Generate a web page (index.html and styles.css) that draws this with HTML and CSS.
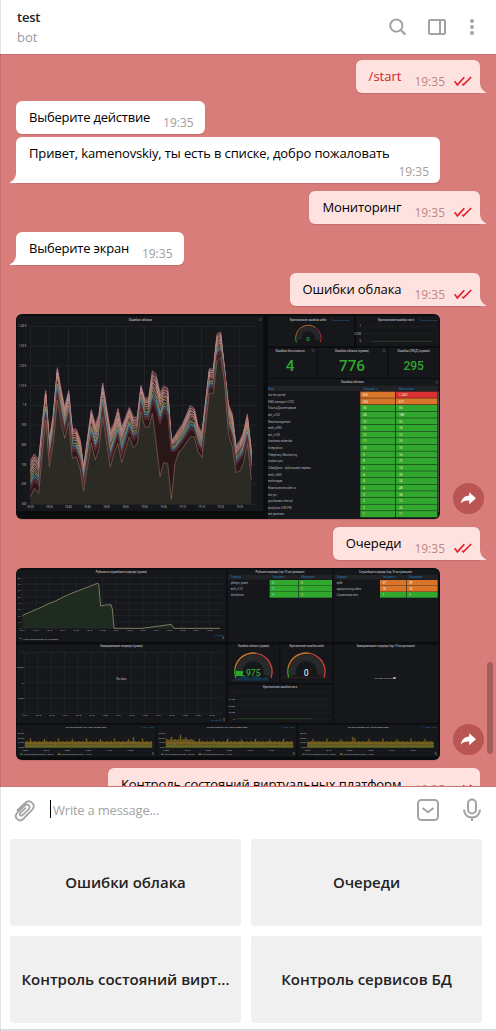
FILE: index.html
```html
<!DOCTYPE html>
<html lang="ru">
<head>
<meta charset="utf-8">
<title>test</title>
<link rel="stylesheet" href="styles.css">
</head>
<body>
<svg class="defs" width="0" height="0">
  <symbol id="ticks" viewBox="0 0 18 11"><path d="M.7 5.3 3.4 8.9 10.3 1.2M8.2 7.8 9.4 8.9 17.2 1" fill="none" stroke="#e5202c" stroke-width="1.7"/></symbol>
  <symbol id="tail" viewBox="0 0 7 11"><path d="M0 0H1C1 5 3 8.5 7 10.2V11H0Z" fill="currentColor"/></symbol>
  <symbol id="share" viewBox="0 0 31 31"><path d="M16.2 9.2 23 15.3 16.2 21.2V17.7C13 17.3 10 18 8 20.4 8.6 15.6 11.8 12.8 16.2 12.6Z" fill="#fff"/></symbol>
</svg>
<div class="app">
  <header class="header">
    <div class="peer"><div class="name">test</div><div class="status">bot</div></div>
    <svg class="header-icons" width="92" height="20" viewBox="0 0 92 20" fill="none" stroke="#a3a3a3" stroke-width="2">
      <circle cx="10.3" cy="8.6" r="6.1"/><path d="M14.8 13 19.3 17.6" stroke-width="2.3"/>
      <rect x="43" y="3" width="16" height="14" rx="1"/><path d="M54 3V17"/>
      <g fill="#a3a3a3" stroke="none"><circle cx="86" cy="4" r="2"/><circle cx="86" cy="10" r="2"/><circle cx="86" cy="16" r="2"/></g>
    </svg>
  </header>

  <main class="chat">
    <div class="msg out"><span class="text command">/start</span><span class="time">19:35</span><svg class="ticks"><use href="#ticks"/></svg><svg class="tail"><use href="#tail"/></svg></div>
    <div class="msg in grouped"><span class="text">Выберите действие</span><span class="time">19:35</span></div>
    <div class="msg in tall"><span class="text">Привет, kamenovskiy, ты есть в списке, добро пожаловать</span><span class="time">19:35</span><svg class="tail"><use href="#tail"/></svg></div>
    <div class="msg out"><span class="text">Мониторинг</span><span class="time">19:35</span><svg class="ticks"><use href="#ticks"/></svg><svg class="tail"><use href="#tail"/></svg></div>
    <div class="msg in"><span class="text">Выберите экран</span><span class="time">19:35</span><svg class="tail"><use href="#tail"/></svg></div>
    <div class="msg out"><span class="text">Ошибки облака</span><span class="time">19:35</span><svg class="ticks"><use href="#ticks"/></svg><svg class="tail"><use href="#tail"/></svg></div>
    <div class="media">
      <svg id="cloud" class="photo" width="424" height="205" viewBox="18 12 1272 615"></svg>
      <svg class="share"><use href="#share"/></svg>
    </div>
    <div class="msg out"><span class="text">Очереди</span><span class="time">19:35</span><svg class="ticks"><use href="#ticks"/></svg><svg class="tail"><use href="#tail"/></svg></div>
    <div class="media">
      <svg id="queues" class="photo" width="424" height="192" viewBox="18 144 1272 576"></svg>
      <svg class="share"><use href="#share"/></svg>
    </div>
    <div class="msg out"><span class="text">Контроль состояний виртуальных платформ</span><span class="time">19:35</span><svg class="ticks"><use href="#ticks"/></svg></div>
    <div class="scrollbar"></div>
  </main>

  <section class="composer">
    <svg class="clip" width="22" height="24" viewBox="0 0 22 24" fill="none" stroke="#a3a3a3" stroke-width="1.8" stroke-linecap="round"><path d="M3.5 11.2 11.2 3.9C16-.3 22.5 5.6 18.3 10.7L9.2 20C5.3 23.7-.6 18.6 2.9 14.2L10.6 6.5C14 3.9 17.1 7.3 14.7 10.1L8.4 16.3C6.6 17.6 4.9 15.8 6.2 14.2L11.3 9.2"/></svg>
    <div class="field">Write a message...</div>
    <svg class="kbd" width="22" height="22" viewBox="0 0 22 22" fill="none" stroke="#a3a3a3" stroke-width="2"><rect x="1" y="1" width="20" height="20" rx="3.5"/><path d="M5.5 9 11 13.3 16.5 9"/></svg>
    <svg class="mic" width="18" height="24" viewBox="0 0 18 24" fill="none" stroke="#a3a3a3" stroke-width="2"><rect x="5" y="1.5" width="8" height="14" rx="4"/><path d="M1 11.5C1 22 17 22 17 11.5M9 19.5V23"/></svg>
  </section>
  <div class="keyboard">
    <div class="key">Ошибки облака</div>
    <div class="key">Очереди</div>
    <div class="key">Контроль состояний вирт...</div>
    <div class="key">Контроль сервисов БД</div>
  </div>
  <div class="bottom-edge"></div>
</div>
<script src="charts.js"></script>
</body>
</html>
```
FILE: styles.css
```css
* { box-sizing: border-box; }
body { margin: 0; background: #fff; font-family: "Open Sans", "Noto Sans", sans-serif; font-size: 13px; }
.defs { position: absolute; }
.app { position: relative; width: 496px; height: 1031px; overflow: hidden; display: flex; flex-direction: column; }
.app::before { content: ""; position: absolute; z-index: 5; left: 0; top: 0; width: 1px; height: 1031px; background: rgba(0, 0, 0, .11); }

.header { flex: none; height: 54px; padding: 7px 18px 0 17px; display: flex; justify-content: space-between; background: #fff; }
.name { font-weight: 600; line-height: 20px; color: #222; letter-spacing: -.2px; }
.status { line-height: 20px; color: #999; }
.header-icons { margin: 10px 0 0 0; }

.chat { position: relative; height: 733px; flex: none; overflow: hidden; display: flex; flex-direction: column; gap: 8px; padding: 5px 16px 0; background: #d87d79; border-top: 1px solid #c56e6c; border-bottom: 1px solid #cd7673; }
.msg { position: relative; flex: none; display: flex; height: 33px; padding-left: 13px; border-radius: 6px; box-shadow: 0 1px 1px #c56c6b; white-space: nowrap; }
.in { align-self: flex-start; background: #fff; color: #fff; padding-right: 11px; border-bottom-left-radius: 0; }
.out { align-self: flex-end; background: #fde2e0; color: #fde2e0; padding-right: 8px; border-bottom-right-radius: 0; }
.grouped { border-bottom-left-radius: 6px; margin-bottom: -5px; }
.text { color: #000; line-height: 18px; margin-top: 7px; letter-spacing: -.1px; }
.in .text { letter-spacing: -.22px; }
.in.tall .text { letter-spacing: -.13px; }
.command { color: #d11e27; letter-spacing: 0; }
.time { color: #a59b9b; font-size: 12px; line-height: 17px; margin: 13px 0 0 13px; }
.out .time { color: #bd8684; }
.tall { height: 46px; width: 424px; justify-content: space-between; }
.tall .text { width: 361px; }
.tall .time { margin: 26px 0 0 -20px; }
.ticks { width: 18px; height: 11px; margin: 16px 0 0 9px; }
.tail { position: absolute; bottom: 0; width: 7px; height: 11px; }
.out .tail { right: -6px; }
.in .tail { left: -6px; transform: scaleX(-1); }

.media { flex: none; display: flex; align-items: flex-end; gap: 13px; }
.photo { flex: none; display: block; border-radius: 6px; background: #0b0c0e; box-shadow: 0 1px 1px #c56c6b; font-family: Roboto, sans-serif; }
.share { flex: none; width: 31px; height: 31px; margin-bottom: 5px; border-radius: 50%; background: #b95552; }
.scrollbar { position: absolute; right: 3px; top: 607px; width: 6px; height: 92px; border-radius: 3px; background: #a45f5d; }

.composer { flex: none; height: 52px; display: flex; background: #fff; }
.clip { margin: 12px 0 0 14px; }
.field { margin: 13px 0 0 14px; height: 18px; line-height: 21px; width: 367px; padding-left: 2px; border-left: 1px solid #000; color: #a3a3a3; letter-spacing: -.22px; }
.kbd { margin-top: 12px; }
.mic { margin: 11px 0 0 24px; }
.keyboard { flex: none; height: 190px; padding: 0 14px 6px 10px; display: grid; grid-template: 87px 87px / 231px 231px; gap: 10px; }
.key { display: flex; align-items: center; justify-content: center; background: #f0f0f0; border-radius: 3px; padding-bottom: 2px; color: #222; font-size: 15px; font-weight: 600; letter-spacing: -.03px; white-space: nowrap; }
.bottom-edge { flex: none; height: 2px; background: #dcdcdc; }
```
FILE: charts.js
```javascript
const NS = "http://www.w3.org/2000/svg";
const PANEL = "#15171b", WHITE = "#b4b6b9", BLUE = "#2c74aa", GREEN = "#31a72e", ORANGE = "#d97529", RED = "#dc3034";

// Small drawing helpers bound to one svg root
function painter(root) {
  const add = (tag, attrs, text) => {
    const el = document.createElementNS(NS, tag);
    for (const key in attrs) el.setAttribute(key, attrs[key]);
    if (text !== undefined) el.textContent = text;
    root.appendChild(el);
    return el;
  };
  return {
    rect: (x, y, width, height, fill = PANEL) => add("rect", { x, y, width, height, fill }),
    path: (d, stroke, width = 2, fill = "none", opacity = 1) =>
      add("path", { d, stroke, "stroke-width": width, fill, opacity }),
    text: (x, y, s, size = 11, fill = WHITE, anchor = "start", weight = 400) =>
      add("text", { x, y, "font-size": size, fill, "text-anchor": anchor, "font-weight": weight }, s)
  };
}
const line = pts => "M" + pts.map(p => p.join(" ")).join("L");
const arc = (cx, cy, r, a, b) => {
  const at = d => [cx + r * Math.cos(d * Math.PI / 180), cy + r * Math.sin(d * Math.PI / 180)].join(" ");
  return `M${at(a)}A${r} ${r} 0 ${b - a > 180 ? 1 : 0} 1 ${at(b)}`;
};

// Each row: x, top series, lowest clustered series, minimum
const cloud = [[61,450,540,560],[73,430,515,535],[86,448,530,550],[107,238,318,330],[118,390,450,470],[130,310,380,400],[142,172,250,270],[153,235,315,335],[164,290,365,385],[176,240,315,335],[187,355,425,445],[199,355,425,440],[210,385,455,475],[221,470,525,543],[244,297,380,400],[256,340,425,450],[267,310,395,415],[278,217,300,320],[301,360,450,472],[313,335,408,425],[324,293,380,400],[335,350,438,458],[358,290,360,380],[370,318,392,415],[382,320,380,400],[393,225,285,305],[404,262,330,350],[416,262,330,352],[427,180,280,310],[438,190,300,395],[450,245,345,500],[461,225,310,458],[473,232,315,460],[484,390,425,568],[495,375,425,460],[507,355,410,425],[518,340,395,415],[541,285,360,380],[553,293,365,380],[564,345,405,425],[576,365,425,443],[598,175,235,250],[610,175,235,250],[621,70,140,155],[632,65,130,140],[644,180,205,220],[655,280,350,370],[667,310,385,410],[678,405,465,488],[690,390,450,482],[700,365,435,460],[712,310,385,400],[724,420,480,508]];
{
  const p = painter(document.getElementById("cloud"));
  p.rect(20, 18, 740, 585);
  for (const [x, y, w, h] of [[774,18,258,91],[1038,18,250,91],[774,114,146,90],[922,114,210,90],[1135,114,153,90],[774,207,514,420]]) p.rect(x, y, w, h);
  p.text(391, 33, "Ошибки облака", 9.5, WHITE, "middle", 500);
  ["1.40 K","1.30 K","1.20 K","1.10 K","1 K","900","800","700","600","500"].forEach((s, i) => {
    const y = 49 + i * 59.3;
    p.path(`M61 ${y}H738`, "#292b2f");
    p.text(49, y + 3, s, 8, WHITE, "end");
  });
  ["18:30","18:35","18:40","18:45","18:50","18:55","19:00","19:05","19:10","19:15","19:20","19:25"].forEach((s, i) => {
    const x = 61 + i * 57.1;
    p.path(`M${x} 49V583`, "#292b2f");
    p.text(x, 594, s, 8, WHITE, "middle");
  });
  const low = cloud.map(r => [r[0], r[3]]);
  p.path(line([...cloud.map(r => [r[0], r[1]]), ...cloud.map(r => [r[0], r[2]]).reverse()]) + "Z", "none", 0, "#302622", .9);
  p.path(line([...cloud.map(r => [r[0], r[2]]), ...low.slice().reverse()]) + "Z", "none", 0, "#291718");
  p.path(line([[61,583], ...low, [724,583]]) + "Z", "none", 0, "#2b2a25");
  const colors = ["#733641","#93738d","#b45949","#9a97ad","#cb8760","#c0a795","#836698","#d16b58","#b7a69a","#b77d42","#765170","#aea39a","#1f1c1e","#c5a455","#71885a","#386e96","#6ba6a9","#2c648c","#923d3e","#274a66","#522729","#6b2931"];
  colors.forEach((c, i) => {
    const f = i / (colors.length - 1);
    p.path(line(cloud.map((r, j) => [r[0], r[1] + (r[2] - r[1]) * Math.min(1, Math.max(0, f + Math.sin(i * 9 + j * 1.6) * .025))])), c, 2.4, "none", .9);
  });
  p.path(line(low), "#8b6553", 2);

  const refresh = (x, y) => p.path(`M${x - 3} ${y - 3}h6v6h-6z`, "#55585d", 1.5);
  [[751,29],[910,122],[1122,122],[1281,217]].forEach(a => refresh(...a));
  p.text(894, 33, "Критические ошибки неба", 8.8, WHITE, "middle", 500);
  p.text(989, 33, "⏱ Last 5 minutes", 7.5, BLUE, "middle");
  p.text(1158, 33, "Критические ошибки лога", 8.8, WHITE, "middle", 500);
  p.text(1253, 33, "⏱ Last 5 minutes", 7.5, BLUE, "middle");
  p.path(arc(895, 84, 28, 170, 370), "#242629", 15);
  p.path(arc(895, 84, 38, 160, 185), GREEN, 3);
  p.path(arc(895, 84, 38, 185, 305), "#b96a2a", 3);
  p.path(arc(895, 84, 38, 305, 380), "#a62d35", 3);
  p.text(894, 93, "0", 18, GREEN, "middle", 500);
  [["1",49],["0.500",71],["0",94]].forEach(([s, y]) => {
    p.text(1053, y + 3, s, 8, WHITE, "end");
    p.path(`M1060 ${y}H1280`, "#26282b", 1.5);
  });
  p.path("M1083 94H1266", "#34482b");
  [[840,"4","Ошибки без клиента"],[1026,"776","Ошибки облака (сумма)"],[1211,"295","Ошибки СЯЦД (сумма)"]].forEach(([x, n, s], i) => {
    p.text(x, 127, s, 9, WHITE, "middle", 500);
    p.text(x, i === 2 ? 180 : 183, n, i === 2 ? 36 : 46, GREEN, "middle", 500);
  });
  p.text(1027, 220, "Ошибки облака", 9.3, WHITE, "middle", 500);
  p.rect(774, 227, 510, 16, "#202226");
  p.text(774, 239, "Имя", 9, BLUE);
  p.text(1059, 239, "Текущее ▾", 9, BLUE);
  p.text(1166, 239, "Максимум", 9, BLUE);
  const rows = [["fox-for-portal","826","1.24 K"],["ENG transport СЛО","256","671"],["Почта Диспетчеров","36","55"],["ext_c102","28","188"],["Nextmanagment","22","32"],["ext6_c095","16","18"],["ext_c103","12","12"],["business-calendar","11","25"],["Integration","10","10"],["Telephony Monitoring","9","16"],["mailsrv.pro","8","20"],["СберДиск - публичный сервис","6","14"],["ext6_c065","4","30"],["exchanges","4","24"],["Компоненты sber.ru","4","48"],["ext-prt","3","38"],["purchases internal","2","13"],["Analytics СЯЗ РФ","2","26"],["ext-partners","1","11"]];
  rows.forEach(([s, a, b], i) => {
    const y = 245 + i * 19.9;
    p.text(774, y + 13, s, 9);
    p.path(`M774 ${y + 19}H1050`, "#202226", 1);
    p.rect(1051, y, 104, 18.5, i < 2 ? ORANGE : GREEN);
    p.rect(1157, y, 125, 18.5, i === 0 ? RED : i === 1 ? ORANGE : GREEN);
    p.text(1059, y + 13, a, 9, "#e9f3e5");
    p.text(1167, y + 13, b, 9, "#e9f3e5");
  });
  p.rect(1283, 245, 4, 361, "#484a4e");
}
{
  const p = painter(document.getElementById("queues"));
  for (const [x, y, w, h] of [[20,148,629,218],[653,148,315,218],[971,148,315,218],[20,373,629,236],[653,373,155,116],[811,373,157,116],[653,493,315,116],[971,373,315,236],[20,614,418,96],[441,614,419,96],[864,614,422,96]]) p.rect(x, y, w, h);
  const title = (x, y, s) => p.text(x, y, s, 8.3, WHITE, "middle", 500);
  title(334, 160, "Рабочие и служебные очереди (сумма)");
  title(810, 160, "Рабочие очереди (top 10 актуальные)");
  title(1127, 160, "Служебные очереди (top 10 актуальные)");
  title(334, 382, "Замороженные очереди (сумма)");
  title(731, 382, "Ошибки облака (сумма)");
  title(890, 382, "Критические ошибки неба");
  title(1127, 382, "Замороженные очереди (top 10 актуальные)");
  title(810, 504, "Критические ошибки лога");

  ["8 K","7 K","6 K","5 K","4 K","3 K","2 K","1 K","0"].forEach((s, i) => {
    const y = 173 + i * 19;
    p.path(`M38 ${y}H636`, "#26282c");
    p.text(33, y + 3, s, 7, WHITE, "end");
  });
  for (let i = 0; i < 15; i++) {
    const x = 38 + i * 40, s = i < 6 ? "18:" + (14 + i) : "19:" + (14 + i);
    p.path(`M${x} 173V325M${x + 6} 397V580`, "#26282c");
    p.text(x, 334, s, 7, WHITE, "middle");
    p.text(x + 7, 589, s, 7, WHITE, "middle");
  }
  const queue = [[38,287],[48,281],[59,277],[82,267],[93,262],[115,251],[130,246],[160,231],[182,221],[262,190],[266,191],[272,258],[286,255],[303,254],[307,267],[312,325],[396,325],[484,313],[492,325],[630,325]];
  p.path(line([[38,325], ...queue, [630,325]]) + "Z", "none", 0, "#1f2a20");
  p.path(line(queue), "#8f8b6d", 2.5);
  p.text(625, 348, "current", 7.5, BLUE, "middle");
  p.rect(28, 355, 7, 2, GREEN);
  p.text(39, 359, "Количество активных очередей", 7);
  p.text(637, 358, "0", 8);

  [["1",397],["0.500",442],["0",488],["-0.50",534],["-1",580]].forEach(([s, y]) => {
    p.path(`M44 ${y}H636`, "#26282c");
    p.text(40, y + 3, s, 7.5, WHITE, "end");
  });
  p.text(334, 479, "No data", 8.5, WHITE, "middle");
  p.text(619, 603, "current ▾", 7.5, BLUE, "middle");
  p.text(640, 603, "0", 8);

  const table = (x0, x1, x2, end, rows) => {
    p.rect(x0 - 8, 165, end - x0 + 8, 14, "#202226");
    p.text(x0, 175, "Очередь", 8, BLUE);
    p.text(x1 + 7, 175, "Текущее ▾", 8, BLUE);
    p.text(x2 + 7, 175, "Максимум", 8, BLUE);
    rows.forEach(([s, a, b, c], i) => {
      const y = 180 + i * 18;
      p.text(x0, y + 12, s, 8);
      p.rect(x1, y, x2 - x1 - 1.5, 17, c);
      p.rect(x2, y, end - x2, 17, c);
      p.text(x1 + 8, y + 12, a, 8, "#fff");
      p.text(x2 + 8, y + 12, b, 8, "#fff");
    });
  };
  table(662, 779, 866, 966, [["phlegm_queue","2","2",GREEN],["ext5_c110","1","1",GREEN],["distribution","1","1",GREEN]]);
  table(980, 1110, 1190, 1283, [["ep86","37","39",ORANGE],["appupcoming orders","18","18",ORANGE],["Социальная сеть","1","1",GREEN]]);

  [[730, "975", GREEN],[889, "0", "#d9dadc"]].forEach(([x, s, c], i) => {
    p.path(arc(x, 455, 42, 165, 375), "#29292a", 21);
    p.path(arc(x, 455, 56, 160, 190), GREEN, 4);
    p.path(arc(x, 455, 56, 190, 280), "#c5762f", 4);
    p.path(arc(x, 455, 56, 280, 380), "#c9453b", 4);
    if (!i) {
      p.path("M660 482L681 475 704 467 720 474 739 466 757 474 775 470V482Z", "none", 0, "#173446");
      p.path("M676 452L700 454 698 465 708 469 678 468Z", "none", 0, GREEN);
    }
    p.text(x, 469, s, 26, c, "middle", 500);
  });
  p.path("M819 472H961", "#4b2427");
  [["1",517],["0.750",537],["0.500",557],["0.250",577],["0",597]].forEach(([s, y]) => {
    p.path(`M680 ${y}H963`, "#26282c", 1.5);
    p.text(675, y + 3, s, 7.5, WHITE, "end");
  });
  p.path("M680 596H908", "#304a2b");
  p.text(1121, 477, "No data to show", 7.5, WHITE, "middle");
  p.rect(1150, 471, 7, 6, WHITE);

  [[45,228,438,425],[468,651,860,847],[892,1075,1286,1270]].forEach(([x, mid, end, stop], n) => {
    p.text(mid, 625, "csr file transfer-361 MTS probe time", 7.6, WHITE, "middle", 500);
    p.text(end - 27, 625, "⏱ Last 1 hour", 7.2, BLUE, "middle");
    ["30 ms","20 ms","10 ms","0 ms"].forEach((s, i) => {
      p.text(x - 3, 642 + i * 14, s, 7, WHITE, "end");
      p.path(`M${x} ${640 + i * 14}H${stop}`, "#292b2f", 1);
    });
    for (let i = 0; i < 6; i++) {
      p.path(`M${x + i * 63} 640V682`, "#292b2f", 1);
      p.text(x + i * 63, 692, ["18:00","18:10","18:50","19:00","19:10","19:30"][i], 7, WHITE, "middle");
    }
    let top = `M${x} 682`, base = top;
    for (let a = x, i = 0; a < stop; a += 3, i++) {
      const h = 15 + (i * 7 + n * 3) % 4 + (i % 14 === 5 ? 8 : 0) + (i === [108, 14, 45][n] ? 15 : 0) + (n === 1 && i < 28 ? 6 : 0);
      top += `V${682 - h}H${a + 3}`;
      base += `V${678 - (i % 22 === 8 ? 7 : i % 3)}H${a + 3}`;
    }
    p.path(top + "V682Z", "#8e742a", 1, "#66531f");
    p.path(`M${x} 669H${stop}`, "#9b7f2b", 2.5, "none", .7);
    p.path(base + "V682Z", "#667430", 1, "#5e692a");
    p.rect(x - 15, 701, 8, 3, GREEN);
    p.text(x - 4, 705, "file-file-readtime  Current: 1.80 ms", 6);
    p.rect(x + 98, 701, 8, 3, "#c99b2f");
    p.text(x + 109, 705, "file-file-writetime  Current: 11.0 ms", 6);
    p.text(end - 11, 705, "0", 8);
  });
}
```
